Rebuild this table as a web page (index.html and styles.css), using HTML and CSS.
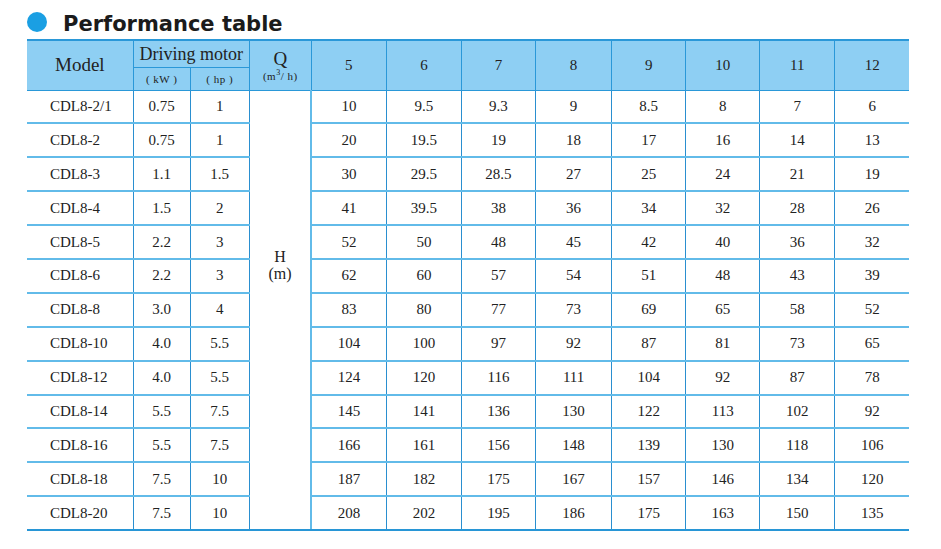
FILE: index.html
```html
<!DOCTYPE html>
<html>
<head>
<meta charset="utf-8">
<link rel="stylesheet" href="styles.css">
</head>
<body>
<div class="page">
  <div class="title"><span class="dot"></span><span class="title-text">Performance table</span></div>
  <table class="perf">
    <colgroup>
      <col style="width:106px"><col style="width:57px"><col style="width:59px"><col style="width:62px">
      <col style="width:75px"><col style="width:75px"><col style="width:74px"><col style="width:76px">
      <col style="width:74px"><col style="width:74px"><col style="width:75px"><col style="width:74px">
    </colgroup>
    <thead>
      <tr class="h1">
        <th rowspan="2" class="big">Model</th>
        <th colspan="2" class="big motor">Driving motor</th>
        <th rowspan="2" class="q"><div class="qq">Q</div><div class="unit">(m<sup>3</sup>/ h)</div></th>
        <th rowspan="2" class="num">5</th><th rowspan="2" class="num">6</th><th rowspan="2" class="num">7</th><th rowspan="2" class="num">8</th>
        <th rowspan="2" class="num">9</th><th rowspan="2" class="num">10</th><th rowspan="2" class="num">11</th><th rowspan="2" class="num">12</th>
      </tr>
      <tr class="h2">
        <th class="unit">( kW )</th>
        <th class="unit">( hp )</th>
      </tr>
    </thead>
    <tbody>
      <tr><td class="model">CDL8-2/1</td><td>0.75</td><td>1</td><td rowspan="13" class="hm">H<br>(m)</td><td>10</td><td>9.5</td><td>9.3</td><td>9</td><td>8.5</td><td>8</td><td>7</td><td>6</td></tr>
      <tr><td class="model">CDL8-2</td><td>0.75</td><td>1</td><td>20</td><td>19.5</td><td>19</td><td>18</td><td>17</td><td>16</td><td>14</td><td>13</td></tr>
      <tr><td class="model">CDL8-3</td><td>1.1</td><td>1.5</td><td>30</td><td>29.5</td><td>28.5</td><td>27</td><td>25</td><td>24</td><td>21</td><td>19</td></tr>
      <tr><td class="model">CDL8-4</td><td>1.5</td><td>2</td><td>41</td><td>39.5</td><td>38</td><td>36</td><td>34</td><td>32</td><td>28</td><td>26</td></tr>
      <tr><td class="model">CDL8-5</td><td>2.2</td><td>3</td><td>52</td><td>50</td><td>48</td><td>45</td><td>42</td><td>40</td><td>36</td><td>32</td></tr>
      <tr><td class="model">CDL8-6</td><td>2.2</td><td>3</td><td>62</td><td>60</td><td>57</td><td>54</td><td>51</td><td>48</td><td>43</td><td>39</td></tr>
      <tr><td class="model">CDL8-8</td><td>3.0</td><td>4</td><td>83</td><td>80</td><td>77</td><td>73</td><td>69</td><td>65</td><td>58</td><td>52</td></tr>
      <tr><td class="model">CDL8-10</td><td>4.0</td><td>5.5</td><td>104</td><td>100</td><td>97</td><td>92</td><td>87</td><td>81</td><td>73</td><td>65</td></tr>
      <tr><td class="model">CDL8-12</td><td>4.0</td><td>5.5</td><td>124</td><td>120</td><td>116</td><td>111</td><td>104</td><td>92</td><td>87</td><td>78</td></tr>
      <tr><td class="model">CDL8-14</td><td>5.5</td><td>7.5</td><td>145</td><td>141</td><td>136</td><td>130</td><td>122</td><td>113</td><td>102</td><td>92</td></tr>
      <tr><td class="model">CDL8-16</td><td>5.5</td><td>7.5</td><td>166</td><td>161</td><td>156</td><td>148</td><td>139</td><td>130</td><td>118</td><td>106</td></tr>
      <tr><td class="model">CDL8-18</td><td>7.5</td><td>10</td><td>187</td><td>182</td><td>175</td><td>167</td><td>157</td><td>146</td><td>134</td><td>120</td></tr>
      <tr class="last"><td class="model">CDL8-20</td><td>7.5</td><td>10</td><td>208</td><td>202</td><td>195</td><td>186</td><td>175</td><td>163</td><td>150</td><td>135</td></tr>
    </tbody>
  </table>
</div>
</body>
</html>
```

FILE: styles.css
```css
html, body {
  margin: 0;
  padding: 0;
  background: #ffffff;
}

.page {
  padding: 12px 0 0 27px;
}

.title {
  display: flex;
  align-items: flex-start;
  height: 24px;
  margin-bottom: 3px;
}

.dot {
  width: 20px;
  height: 20px;
  border-radius: 50%;
  background: #1a9fe3;
  margin-right: 16px;
}

.title-text {
  font-family: "DejaVu Sans", sans-serif;
  font-weight: bold;
  font-size: 21px;
  line-height: 24px;
  color: #1b1b1b;
}

.perf {
  border-collapse: collapse;
  table-layout: fixed;
  width: 882px;
  font-family: "Liberation Serif", "Times New Roman", serif;
  color: #222222;
}

.perf th {
  background: #8ecff3;
  font-weight: normal;
  border: 1px solid #2a98d8;
  padding: 0;
  text-align: center;
  vertical-align: middle;
}

.perf thead tr.h1 th {
  border-top: 2px solid #2a98d8;
}

.perf thead tr.h1 {
  height: 27px;
}

.perf thead tr.h2 {
  height: 23px;
}

.perf th.big {
  font-size: 19px;
}

.perf th.motor {
  font-size: 18px;
  line-height: 22px;
}

.perf th.num {
  font-size: 15px;
}

.perf th.q {
  line-height: 15px;
  padding-top: 2px;
}

.qq {
  font-size: 19px;
  line-height: 20px;
}

.unit {
  font-size: 11px;
  letter-spacing: 0.5px;
}

.perf th.unit {
  font-size: 11px;
}

.unit sup {
  font-size: 8px;
  line-height: 0;
}

.perf td {
  height: 31.9px;
  padding: 0;
  font-size: 15px;
  text-align: center;
  vertical-align: middle;
  border-left: 1px solid #2a8fd0;
  border-right: 1px solid #2a8fd0;
  border-bottom: 2px solid #62bbe9;
}

.perf tr.last td {
  border-bottom: 2px solid #2896d6;
}

.perf td.model {
  text-align: left;
  padding-left: 23px;
  border-left: none;
}

.perf td.hm {
  vertical-align: top;
  padding-top: 157px;
  font-size: 16px;
  line-height: 17px;
  border-bottom: 2px solid #2896d6;
  border-right: 2px solid #62bbe9;
}

.perf th:first-child {
  border-left: none;
}

.perf th:last-child,
.perf td:last-child {
  border-right: none;
}
```
